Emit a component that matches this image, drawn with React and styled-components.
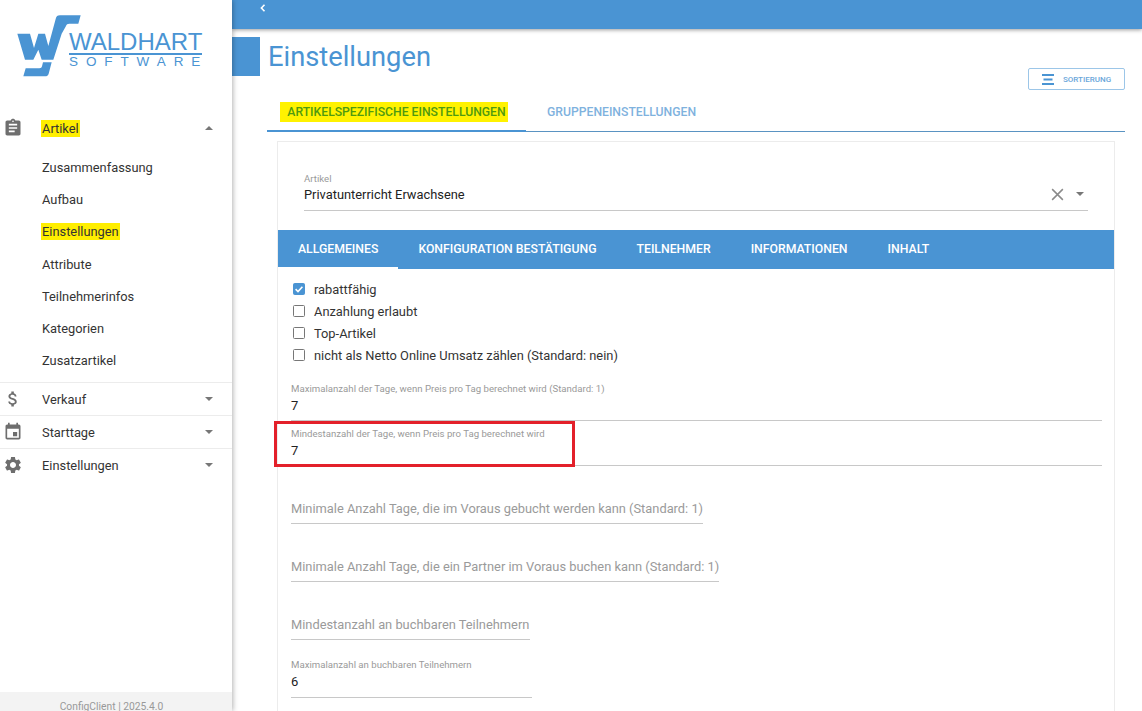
import React from "react";
import styled, { createGlobalStyle } from "styled-components";

const BLUE = "#4a94d3";

const menuIcons = {
  assignment:
    "M19 3h-4.18C14.4 1.84 13.3 1 12 1c-1.3 0-2.4.84-2.82 2H5c-1.1 0-2 .9-2 2v14c0 1.1.9 2 2 2h14c1.1 0 2-.9 2-2V5c0-1.1-.9-2-2-2zm-7 0c.55 0 1 .45 1 1s-.45 1-1 1-1-.45-1-1 .45-1 1-1zm2 14H7v-2h7v2zm3-4H7v-2h10v2zm0-4H7V7h10v2z",
  money:
    "M11.8 10.9c-2.27-.59-3-1.2-3-2.15 0-1.09 1.01-1.85 2.7-1.85 1.78 0 2.44.85 2.5 2.1h2.21c-.07-1.72-1.12-3.3-3.21-3.81V3h-3v2.16c-1.94.42-3.5 1.68-3.5 3.61 0 2.31 1.91 3.46 4.7 4.13 2.5.6 3 1.48 3 2.41 0 .69-.49 1.79-2.7 1.79-2.06 0-2.87-.92-2.98-2.1h-2.2c.12 2.19 1.76 3.42 3.68 3.83V21h3v-2.15c1.95-.37 3.5-1.5 3.5-3.55 0-2.84-2.43-3.81-4.7-4.4z",
  event:
    "M17 12h-5v5h5v-5zM16 1v2H8V1H6v2H5c-1.11 0-1.99.9-1.99 2L3 19c0 1.1.89 2 2 2h14c1.1 0 2-.9 2-2V5c0-1.1-.9-2-2-2h-1V1h-2zm3 18H5V8h14v11z",
  settings:
    "M19.14 12.94c.04-.3.06-.61.06-.94 0-.32-.02-.64-.07-.94l2.03-1.58c.18-.14.23-.41.12-.61l-1.92-3.32c-.12-.22-.37-.29-.59-.22l-2.39.96c-.5-.38-1.03-.7-1.62-.94l-.36-2.54c-.04-.24-.24-.41-.48-.41h-3.84c-.24 0-.43.17-.47.41l-.36 2.54c-.59.24-1.13.57-1.62.94l-2.39-.96c-.22-.08-.47 0-.59.22L2.74 8.87c-.12.21-.08.47.12.61l2.03 1.58c-.05.3-.09.63-.09.94s.02.64.07.94l-2.03 1.58c-.18.14-.23.41-.12.61l1.92 3.32c.12.22.37.29.59.22l2.39-.96c.5.38 1.03.7 1.62.94l.36 2.54c.05.24.24.41.48.41h3.84c.24 0 .44-.17.47-.41l.36-2.54c.59-.24 1.13-.56 1.62-.94l2.39.96c.22.08.47 0 .59-.22l1.92-3.32c.12-.22.07-.47-.12-.61l-2.01-1.58zM12 15.6c-1.98 0-3.6-1.62-3.6-3.6s1.62-3.6 3.6-3.6 3.6 1.62 3.6 3.6-1.62 3.6-3.6 3.6z",
};

const subItems = [
  { label: "Zusammenfassung" },
  { label: "Aufbau" },
  { label: "Einstellungen", marked: true },
  { label: "Attribute" },
  { label: "Teilnehmerinfos" },
  { label: "Kategorien" },
  { label: "Zusatzartikel" },
];

const groups = [
  { icon: "money", label: "Verkauf" },
  { icon: "event", label: "Starttage" },
  { icon: "settings", label: "Einstellungen" },
];

const innerTabs = ["Allgemeines", "Konfiguration Bestätigung", "Teilnehmer", "Informationen", "Inhalt"];

const checks = [
  { label: "rabattfähig", checked: true },
  { label: "Anzahlung erlaubt" },
  { label: "Top-Artikel" },
  { label: "nicht als Netto Online Umsatz zählen (Standard: nein)" },
];

const MenuIcon = ({ name }) => (
  <IconSvg viewBox="0 0 24 24">
    <path d={menuIcons[name]} />
  </IconSvg>
);

const App = () => (
  <>
    <GlobalStyle />
    <Page>
      <Sidebar>
        <Logo>
          <svg width="64" height="62" viewBox="21 14 192 186">
            <path
              fill={BLUE}
              d="M22 70H60L72 113 85 70H105L115 107 125 70 137 26C139 18 142 15 150 15H212L205 40H178C172 40 170 42 168 47L155 70 130 148H95L85 118 70 148H45Z"
            />
            <path fill={BLUE} d="M99 156H125L116 190C114 196 111 198 105 198H40L47 174H88C93 174 95 172 96 168Z" />
          </svg>
          <LogoText>
            <LogoName>WALDHART</LogoName>
            <LogoSub>SOFTWARE</LogoSub>
          </LogoText>
        </Logo>

        <Nav>
          <GroupHead>
            <MenuIcon name="assignment" />
            <GroupLabel><Marked>Artikel</Marked></GroupLabel>
            <Caret $up />
          </GroupHead>
          <SubList>
            {subItems.map((item) => (
              <SubItem key={item.label}>
                {item.marked ? <Marked>{item.label}</Marked> : item.label}
              </SubItem>
            ))}
          </SubList>
          {groups.map((group) => (
            <Group key={group.label}>
              <MenuIcon name={group.icon} />
              <GroupLabel>{group.label}</GroupLabel>
              <Caret />
            </Group>
          ))}
        </Nav>

        <Footer>ConfigClient | 2025.4.0</Footer>
      </Sidebar>

      <Main>
        <TopBar>
          <svg width="10" height="10" viewBox="0 0 10 10" fill="none" stroke="#fff" strokeWidth="1.6">
            <path d="M6.5 1.8 3.4 5l3.1 3.2" />
          </svg>
        </TopBar>

        <TitleRow>
          <TitleBlock />
          <Title>Einstellungen</Title>
          <SortButton>
            <svg width="12" height="11" viewBox="0 0 12 11" fill={BLUE}>
              <rect x="0" y="0" width="12" height="2" />
              <rect x="1.5" y="4.5" width="9" height="2" />
              <rect x="0" y="9" width="12" height="2" />
            </svg>
            Sortierung
          </SortButton>
        </TitleRow>

        <OuterTabs>
          <OuterTab $active><OuterMarked>Artikelspezifische Einstellungen</OuterMarked></OuterTab>
          <OuterTab>Gruppeneinstellungen</OuterTab>
        </OuterTabs>

        <Card>
          <ArticleSelect>
            <SmallLabel>Artikel</SmallLabel>
            <SelectRow>
              <SelectValue>Privatunterricht Erwachsene</SelectValue>
              <ClearIcon viewBox="0 0 14 14">
                <path d="M2 2l10 10M12 2 2 12" />
              </ClearIcon>
              <Caret />
            </SelectRow>
          </ArticleSelect>

          <InnerTabs>
            {innerTabs.map((tab, i) => (
              <InnerTab key={tab} $active={i === 0}>{tab}</InnerTab>
            ))}
          </InnerTabs>

          <Form>
            <CheckList>
              {checks.map((c) => (
                <CheckRow key={c.label}>
                  <CheckBox $checked={c.checked}>
                    {c.checked && (
                      <svg width="12" height="12" viewBox="0 0 12 12" fill="none" stroke="#fff" strokeWidth="1.6">
                        <path d="M2.6 6.2 5 8.5l4.4-4.8" />
                      </svg>
                    )}
                  </CheckBox>
                  {c.label}
                </CheckRow>
              ))}
            </CheckList>

            <FilledField>
              <SmallLabel>Maximalanzahl der Tage, wenn Preis pro Tag berechnet wird (Standard: 1)</SmallLabel>
              <FieldValue>7</FieldValue>
            </FilledField>
            <HighlightedField>
              <SmallLabel>Mindestanzahl der Tage, wenn Preis pro Tag berechnet wird</SmallLabel>
              <FieldValue>7</FieldValue>
              <RedFrame />
            </HighlightedField>

            <EmptyField $width={412} $top={30}>Minimale Anzahl Tage, die im Voraus gebucht werden kann (Standard: 1)</EmptyField>
            <EmptyField $width={428} $top={30}>Minimale Anzahl Tage, die ein Partner im Voraus buchen kann (Standard: 1)</EmptyField>
            <EmptyField $width={239} $top={30}>Mindestanzahl an buchbaren Teilnehmern</EmptyField>
            <ShortField>
              <SmallLabel>Maximalanzahl an buchbaren Teilnehmern</SmallLabel>
              <FieldValue>6</FieldValue>
            </ShortField>
          </Form>
        </Card>
      </Main>
    </Page>
  </>
);

export default App;

const GlobalStyle = createGlobalStyle`
  html, body {
    margin: 0;
    height: 711px;
    overflow: hidden;
    background: #fff;
    font-family: Roboto, "Liberation Sans", sans-serif;
  }
  * { box-sizing: border-box; }
`;

const Page = styled.div`
  display: flex;
  width: 1142px;
  height: 711px;
  overflow: hidden;
`;

const Sidebar = styled.aside`
  position: relative;
  z-index: 2;
  display: flex;
  flex-direction: column;
  flex: 0 0 232px;
  background: #fff;
  box-shadow: 1px 0 5px rgba(0, 0, 0, 0.3);
`;

const Logo = styled.div`
  display: flex;
  align-items: flex-start;
  gap: 0;
  height: 112px;
  padding: 15px 0 0 17px;
`;

const LogoText = styled.div`
  display: flex;
  flex-direction: column;
  margin: 16px 0 0 -12px;
  color: ${BLUE};
`;

const LogoName = styled.div`
  font-family: "Liberation Sans", sans-serif;
  font-size: 24px;
  line-height: 21px;
  width: 133px;
  padding-bottom: 1px;
  border-bottom: 2px solid ${BLUE};
`;

const LogoSub = styled.div`
  font-family: "Liberation Sans", sans-serif;
  font-size: 13.5px;
  line-height: 14px;
  letter-spacing: 7.9px;
  white-space: nowrap;
`;

const Nav = styled.nav`
  flex: 1;
`;

const GroupHead = styled.div`
  display: flex;
  align-items: center;
  height: 32px;
  padding: 0 19px 0 3px;
`;

const Group = styled(GroupHead)`
  height: 33px;
  border-top: 1px solid #ececec;
`;

const IconSvg = styled.svg`
  width: 20px;
  height: 20px;
  flex: none;
  fill: #6e6e6e;
`;

const GroupLabel = styled.div`
  flex: 1;
  margin-left: 19px;
  font-size: 12.85px;
  color: #333;
`;

const Marked = styled.span`
  background: #ffee00;
  padding: 1px 1px;
  margin-left: -1px;
`;

const OuterMarked = styled(Marked)`
  background: #fff200;
  padding: 3px 2px 3px 7px;
  margin-left: -6px;
`;

const Caret = styled.span`
  flex: none;
  width: 0;
  height: 0;
  margin-left: 8px;
  border-left: 4.5px solid transparent;
  border-right: 4.5px solid transparent;
  ${({ $up }) => ($up ? "border-bottom: 4.5px solid #777;" : "border-top: 4.5px solid #777;")}
`;

const SubList = styled.div`
  display: flex;
  flex-direction: column;
  padding: 7.4px 0 5.6px 42px;
`;

const SubItem = styled.div`
  height: 32.2px;
  display: flex;
  align-items: center;
  font-size: 12.85px;
  color: #333;
`;

const Footer = styled.div`
  height: 19px;
  padding: 8px 9px 0 0;
  background: #f3f3f3;
  color: #999;
  font-size: 10.3px;
  line-height: 13px;
  text-align: center;
`;

const Main = styled.main`
  flex: 1;
  min-width: 0;
  display: flex;
  flex-direction: column;
`;

const TopBar = styled.div`
  display: flex;
  align-items: flex-start;
  flex: none;
  height: 29px;
  padding: 3px 0 0 26px;
  background: ${BLUE};
  box-shadow: 0 1px 4px rgba(0, 0, 0, 0.4);
`;

const TitleRow = styled.div`
  display: flex;
  align-items: flex-start;
  flex: none;
  height: 63px;
  padding: 8px 17px 0 0;
`;

const TitleBlock = styled.div`
  flex: none;
  width: 28px;
  height: 39px;
  background: ${BLUE};
`;

const Title = styled.h1`
  flex: 1;
  margin: 0 0 0 8px;
  font-size: 27.3px;
  line-height: 40px;
  font-weight: 400;
  color: ${BLUE};
`;

const SortButton = styled.button`
  display: flex;
  align-items: center;
  gap: 9px;
  width: 97px;
  height: 22px;
  margin-top: 31px;
  padding: 0 0 0 13px;
  background: #fff;
  border: 1px solid #9cc6e8;
  border-radius: 2px;
  color: #6aa6da;
  font: 500 8px Roboto, sans-serif;
  text-transform: uppercase;
`;

const OuterTabs = styled.div`
  display: flex;
  flex: none;
  height: 40px;
  margin: 0 17px 0 35px;
  border-bottom: 1px solid #5a93c2;
`;

const OuterTab = styled.div`
  display: flex;
  align-items: center;
  justify-content: center;
  width: ${({ $active }) => ($active ? "259px" : "auto")};
  height: 40px;
  padding: ${({ $active }) => ($active ? "2px 0 0 1px" : "0 0 0 21px")};
  font-size: 12.2px;
  font-weight: 500;
  text-transform: uppercase;
  color: ${({ $active }) => ($active ? "#4f9a10" : "#7fb2de")};
  border-bottom: ${({ $active }) => ($active ? `2px solid ${BLUE}` : "none")};
`;

const Card = styled.section`
  flex: 1;
  margin: 9px 27px 0 45px;
  border: 1px solid #ececec;
  border-bottom: none;
`;

const ArticleSelect = styled.div`
  height: 88px;
  padding: 31px 26px 0 26px;
`;

const SmallLabel = styled.div`
  font-size: 9.65px;
  line-height: 11px;
  color: #9a9a9a;
`;

const SelectRow = styled.div`
  display: flex;
  align-items: center;
  height: 27px;
  padding: 0 4px 6px 0;
  border-bottom: 1px solid #c8c8c8;
`;

const SelectValue = styled.div`
  flex: 1;
  font-size: 12.85px;
  color: #222;
`;

const ClearIcon = styled.svg`
  width: 15px;
  height: 15px;
  margin-right: 3px;
  fill: none;
  stroke: #8a8a8a;
  stroke-width: 1.4;
`;

const InnerTabs = styled.div`
  display: flex;
  height: 39px;
  background: ${BLUE};
`;

const InnerTab = styled.div`
  display: flex;
  align-items: center;
  padding: 0 20px;
  font-size: 12.25px;
  font-weight: 500;
  text-transform: uppercase;
  color: #fff;
  border-bottom: 2px solid ${({ $active }) => ($active ? "#fff" : "transparent")};
`;

const Form = styled.div`
  padding: 9px 12px 0 13px;
`;

const CheckList = styled.div`
  display: flex;
  flex-direction: column;
  margin-bottom: 11px;
`;

const CheckRow = styled.div`
  display: flex;
  align-items: center;
  height: 22px;
  font-size: 12.85px;
  color: #333;
`;

const CheckBox = styled.span`
  display: flex;
  flex: none;
  width: 12px;
  height: 12px;
  margin: 0 9px 0 2px;
  border-radius: 1.5px;
  border: 1.5px solid ${({ $checked }) => ($checked ? BLUE : "#777")};
  background: ${({ $checked }) => ($checked ? BLUE : "#fff")};
  svg { margin: -1.5px; }
`;

const FilledField = styled.div`
  height: 44px;
  padding-top: 6px;
  border-bottom: 1px solid #c8c8c8;
`;

const HighlightedField = styled(FilledField)`
  position: relative;
  height: 45px;
  padding-top: 7px;
`;

const FieldValue = styled.div`
  margin-top: 3px;
  font-size: 13px;
  line-height: 18px;
  color: #222;
`;

const RedFrame = styled.div`
  position: absolute;
  left: -17px;
  top: 0;
  width: 301px;
  height: 46px;
  border: 3px solid #e3202a;
`;

const EmptyField = styled.div`
  width: ${({ $width }) => $width}px;
  height: 28px;
  margin-top: ${({ $top }) => $top}px;
  font-size: 12.85px;
  line-height: 26px;
  white-space: nowrap;
  color: #9a9a9a;
  border-bottom: 1px solid #c8c8c8;
`;

const ShortField = styled(FilledField)`
  width: 241px;
  height: 46px;
  margin-top: 12px;
  padding-top: 7px;
`;
